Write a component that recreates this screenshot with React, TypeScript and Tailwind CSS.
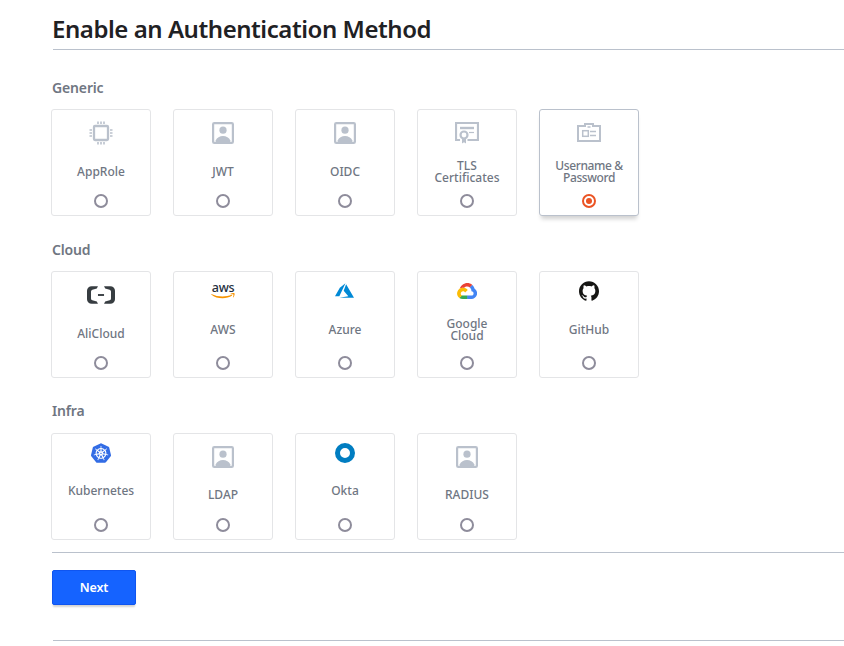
import type { ReactNode } from "react";
import { SiGithub, SiKubernetes } from "react-icons/si";

const PersonIcon = () => (
  <svg width="22" height="22" viewBox="0 0 22 22" fill="#bac1cc">
    <rect x="1.100" y="1.100" width="19.800" height="19.800" rx="1.200" fill="none" stroke="#bac1cc" strokeWidth="2.200" />
    <circle cx="11" cy="8.200" r="3.600" />
    <path d="M3.800 20v-1.800c1-2.500 4-4.200 7.200-4.200s6.200 1.700 7.200 4.200V20z" />
  </svg>
);

const ChipIcon = () => (
  <svg width="24" height="24" viewBox="0 0 24 24" fill="none" stroke="#bac1cc">
    <rect x="5" y="5" width="14" height="14" rx="1" strokeWidth="2.300" />
    <path
      d="M9 .5v2.500M12 .5v2.500M15 .5v2.500M9 21v2.500M12 21v2.500M15 21v2.500M.5 9h2.500M.5 12h2.500M.5 15h2.500M21 9h2.500M21 12h2.500M21 15h2.500"
      strokeWidth="1.600"
    />
  </svg>
);

const CertificateIcon = () => (
  <svg width="24" height="22" viewBox="0 0 24 22" fill="none" stroke="#bac1cc">
    <path d="M5 18H1V1h22v17H12.500" strokeWidth="2.200" />
    <path d="M5 6h14" strokeWidth="2.400" />
    <path d="M14 10.500h5" strokeWidth="1.200" />
    <circle cx="9" cy="13" r="3.500" strokeWidth="2.200" />
    <path d="M7 16.500v5l2-1.200 2 1.200v-5z" fill="#bac1cc" stroke="none" />
  </svg>
);

const BadgeIcon = () => (
  <svg className="mb-[2px]" width="24" height="19" viewBox="0 0 24 19" fill="none" stroke="#bac1cc">
    <path d="M8 3H1v15h22V3h-7V1H8z" strokeWidth="2" />
    <path d="M10.500 4h3" strokeWidth="1.500" />
    <rect x="5.700" y="7.700" width="5.600" height="5.600" strokeWidth="1.500" />
    <path d="M13 8.500h6M13 12.500h6" strokeWidth="1.500" />
  </svg>
);

const AliCloudIcon = () => (
  <svg width="28" height="18" viewBox="0 4.400 24 15.200" fill="#373d41" preserveAspectRatio="none">
    <path d="M3.996 4.517h5.400L8.400 6.500 4.600 7.506a1.668 1.668 0 0 0-1.165 1.601v5.786a1.668 1.668 0 0 0 1.165 1.600l3.800 1.007.996 1.983H3.996A3.996 3.996 0 0 1 0 15.487V8.513a3.996 3.996 0 0 1 3.996-3.996z" />
    <path d="M20.004 4.517h-5.400l.996 1.983 3.800 1.006a1.668 1.668 0 0 1 1.165 1.601v5.786a1.668 1.668 0 0 1-1.165 1.600l-3.800 1.007-.996 1.983h5.400A3.996 3.996 0 0 0 24 15.487V8.513a3.996 3.996 0 0 0-3.996-3.996z" />
    <path d="M9.400 11.200h5.200v1.600H9.400z" />
  </svg>
);

const AwsIcon = () => (
  <div className="flex flex-col items-center">
    <span className="h-[9px] font-['Noto_Sans',sans-serif] text-[12.500px] leading-[7px] font-medium tracking-[-0.3px] text-[#252f3e]">
      aws
    </span>
    <svg width="24" height="6" viewBox="0 0 24 6" fill="#f79400">
      <path d="M.4.900C6.500 4 14.500 4.100 20.700 1.800l.5.800C15.300 6.400 5.800 6.200.2 1.400z" />
      <path d="M19.500.800c1.300-.7 3.600-.9 4-.4.400.500-.1 3-1.300 4l-.3-.2c.4-1.100.8-2.300.500-2.700-.3-.4-1.700-.4-2.900-.3z" />
    </svg>
  </div>
);

const AzureIcon = () => (
  <svg className="mr-px mb-[2px]" width="19" height="15" viewBox="0 2.700 24 18.600" fill="#0089d6">
    <path d="M5.483 21.300H24L14.025 4.013l-3.038 8.347 5.836 6.938zM13.230 2.700 6.105 8.677 0 19.253h5.505z" />
  </svg>
);

const GoogleCloudIcon = () => (
  <svg width="20" height="16" viewBox="5 14 117 94" preserveAspectRatio="none">
    <path
      fill="#ea4335"
      d="M80.600 40.300h.4l-.2-.2 14-14v-.3c-11.800-10.400-28.100-14-43.200-9.500C36.500 20.800 24.900 32.800 20.700 48c.2-.1.5-.2.8-.2 5.200-3.400 11.400-5.400 17.900-5.400 2.200 0 4.300.2 6.400.6.1-.1.2-.1.3-.1 9-9.900 24.200-11.100 34.600-2.600z"
    />
    <path
      fill="#4285f4"
      d="M108.100 47.800c-2.300-8.500-7.100-16.200-13.800-22.100L80 39.900c6 4.900 9.500 12.300 9.300 20v2.500c16.900 0 16.900 25.200 0 25.200H63.900v20.200h25.400c14.600.1 27.500-9.300 31.800-23.100 4.300-13.800-1-28.800-13-36.900z"
    />
    <path fill="#34a853" d="M39 107.900h25.500V87.700H39c-1.900 0-3.700-.4-5.400-1.100l-15.200 14.800c6 4.300 13.200 6.500 20.600 6.500z" />
    <path
      fill="#fbbc05"
      d="M40.200 41.900c-14.900.1-28.100 9.300-32.900 22.800-4.800 13.600 0 28.500 11.800 37.300l15.600-14.900c-8.600-3.700-10.600-14.500-4-20.800 6.600-6.400 17.800-4.400 21.700 3.800L68 55.200C61.400 46.900 51.100 42 40.200 41.900z"
    />
  </svg>
);

const OktaIcon = () => (
  <svg width="20" height="20" viewBox="0 0 20 20">
    <circle cx="10" cy="10" r="7.500" fill="none" stroke="#007dc1" strokeWidth="5" />
  </svg>
);

interface Method {
  label: string[];
  icon: ReactNode;
  small?: boolean;
  selected?: boolean;
}

interface Section {
  title: string;
  raised?: boolean;
  methods: Method[];
}

const sections: Section[] = [
  {
    title: "Generic",
    methods: [
      { label: ["AppRole"], icon: <ChipIcon /> },
      { label: ["JWT"], icon: <PersonIcon /> },
      { label: ["OIDC"], icon: <PersonIcon /> },
      { label: ["TLS", "Certificates"], icon: <CertificateIcon /> },
      { label: ["Username &", "Password"], icon: <BadgeIcon />, selected: true },
    ],
  },
  {
    title: "Cloud",
    methods: [
      { label: ["AliCloud"], icon: <AliCloudIcon /> },
      { label: ["AWS"], icon: <AwsIcon />, small: true },
      { label: ["Azure"], icon: <AzureIcon />, small: true },
      { label: ["Google", "Cloud"], icon: <GoogleCloudIcon />, small: true },
      { label: ["GitHub"], icon: <SiGithub size={20} color="#161614" />, small: true },
    ],
  },
  {
    title: "Infra",
    raised: true,
    methods: [
      { label: ["Kubernetes"], icon: <SiKubernetes size={20} color="#326ce5" />, small: true },
      { label: ["LDAP"], icon: <PersonIcon /> },
      { label: ["Okta"], icon: <OktaIcon />, small: true },
      { label: ["RADIUS"], icon: <PersonIcon /> },
    ],
  },
];

function MethodCard({ label, icon, small, selected, raised }: Method & { raised?: boolean }) {
  return (
    <label
      className={`flex h-[107px] w-[100px] flex-col items-center rounded-[3px] border bg-white ${
        selected
          ? "border-[#bac1cc] tracking-[-0.4px] shadow-[0_5px_4px_-2px_rgba(0,0,0,0.18)]"
          : "border-[#e4e5e7]"
      }`}
    >
      <span className={`flex shrink-0 items-center justify-center ${small ? "h-[38px]" : "h-[46px]"}`}>{icon}</span>
      <span
        className={`flex shrink-0 flex-col items-center justify-center text-[12px] leading-[12px] font-medium text-[#6f7682] ${
          small ? "h-[38px]" : "h-[30px]"
        } ${raised ? "pb-px" : "pt-px"}`}
      >
        {label.map((line) => (
          <span key={line} className="h-3 whitespace-nowrap">
            {line}
          </span>
        ))}
      </span>
      <span
        className={`mt-2 flex size-[14px] items-center justify-center rounded-full border-2 ${
          selected ? "border-[#eb5424]" : "border-[#8e8c9b]"
        }`}
      >
        {selected && <span className="size-[6px] rounded-full bg-[#eb5424]" />}
      </span>
    </label>
  );
}

export default function App() {
  return (
    <main className="h-[646px] overflow-hidden bg-white pl-[52px] font-['Noto_Sans','Open_Sans',sans-serif]">
      <h1 className="ml-px flex h-[50px] items-center border-b border-[#bac1cc] pt-2 text-[24px] leading-8 font-semibold tracking-[-0.45px] whitespace-nowrap text-[#1f2124]">
        <span className="-ml-px">Enable an Authentication Method</span>
      </h1>
      <div className="flex flex-col pt-[27px]">
        {sections.map(({ title, raised, methods }) => (
          <section key={title} className="h-[162px]">
            <h2
              className={`mb-[10px] h-[22px] text-[14px] font-semibold tracking-[-0.15px] text-[#6f7682] ${
                raised ? "leading-[20px]" : "leading-[22px]"
              }`}
            >
              {title}
            </h2>
            <div className="-ml-px flex gap-[22px]">
              {methods.map((method) => (
                <MethodCard key={method.label[0]} raised={raised} {...method} />
              ))}
            </div>
          </section>
        ))}
      </div>
      <div className="-mt-[11px] h-[88px] border-t border-[#bac1cc] pt-[17px]">
        <button className="flex h-[35px] w-[84px] items-center justify-center rounded-[2px] border border-[#0f55f0] bg-[#1563ff] pt-px text-[12.5px] font-semibold tracking-[-0.1px] text-white shadow-[0_3px_2px_-1px_rgba(0,0,0,0.18)]">
          Next
        </button>
      </div>
      <hr className="ml-px border-[#bac1cc]" />
    </main>
  );
}
